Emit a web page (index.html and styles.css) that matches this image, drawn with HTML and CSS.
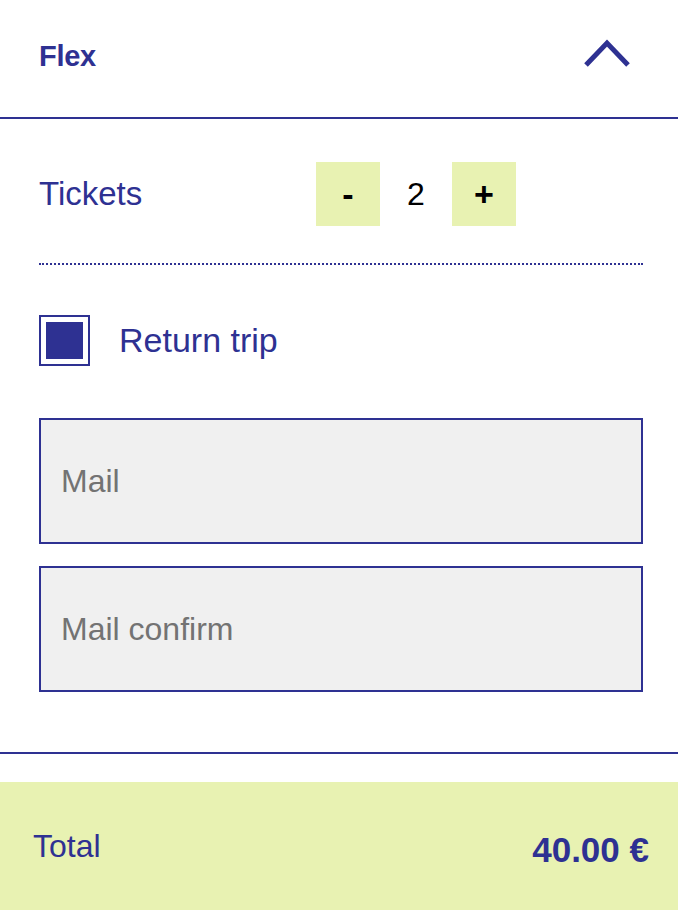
FILE: index.html
```html
<!DOCTYPE html>
<html lang="en">
<head>
  <meta charset="UTF-8">
  <meta name="viewport" content="width=device-width, initial-scale=1.0">
  <title>Flex</title>
  <link rel="stylesheet" href="styles.css">
</head>
<body>
  <div class="panel">
    <div class="panel-header">
      <h2>Flex</h2>
      <svg class="chevron" width="48" height="30" viewBox="0 0 48 30">
        <polyline points="3,26 24,4 45,26" fill="none" stroke="#2e3192" stroke-width="5"/>
      </svg>
    </div>

    <div class="panel-body">
      <div class="tickets-row">
        <span class="label">Tickets</span>
        <div class="stepper">
          <button class="step-btn" onclick="changeCount(-1)">-</button>
          <span class="count" id="count">2</span>
          <button class="step-btn" onclick="changeCount(1)">+</button>
        </div>
      </div>

      <label class="check-row">
        <span class="checkbox"><span class="check-fill"></span></span>
        <span class="label label-wide">Return trip</span>
      </label>

      <input class="field" type="email" placeholder="Mail">
      <input class="field" type="email" placeholder="Mail confirm">
    </div>

    <div class="total-bar">
      <span class="total-label">Total</span>
      <span class="total-price" id="total">40.00 €</span>
    </div>
  </div>

  <script>
    // Preço por bilhete
    const price = 20;
    let count = 2;

    function changeCount(step) {
      count = Math.max(1, count + step);
      document.getElementById('count').textContent = count;
      document.getElementById('total').textContent = (count * price).toFixed(2) + ' €';
    }
  </script>
</body>
</html>
```

FILE: styles.css
```css
body {
  font-family: "Liberation Sans", Arial, sans-serif;
  margin: 0;
  padding: 0;
  background-color: #fff;
  color: #2e3192;
}

.panel {
  width: 678px;
}

.panel-header {
  height: 117px;
  padding: 0 47px 0 39px;
  display: flex;
  justify-content: space-between;
  align-items: center;
  border-bottom: 2px solid #2e3192;
}

.panel-header h2 {
  margin: -5px 0 0;
  font-size: 29px;
  font-weight: bold;
  letter-spacing: -0.3px;
}

.chevron {
  display: block;
  margin-top: -9px;
}

.panel-body {
  padding: 43px 35px 60px 39px;
  border-bottom: 2px solid #2e3192;
}

.tickets-row {
  display: flex;
  align-items: center;
  padding-bottom: 37px;
  border-bottom: 2px dotted #2e3192;
}

.label {
  font-size: 33px;
}

.label-wide {
  font-size: 34px;
}

.stepper {
  display: flex;
  align-items: center;
  margin-left: auto;
  margin-right: 127px;
}

.step-btn {
  width: 64px;
  height: 64px;
  border: none;
  padding: 0;
  background: #e8f2b2;
  color: #000;
  font-family: inherit;
  font-size: 34px;
  font-weight: bold;
  cursor: pointer;
}

.count {
  width: 72px;
  text-align: center;
  font-size: 32px;
  color: #000;
}

.check-row {
  display: flex;
  align-items: center;
  gap: 29px;
  margin-top: 50px;
  margin-bottom: 52px;
}

.checkbox {
  border: 2px solid #2e3192;
  padding: 5px;
  width: 37px;
  height: 37px;
}

.check-fill {
  display: block;
  width: 37px;
  height: 37px;
  background: #2e3192;
}

.field {
  display: block;
  width: 100%;
  height: 126px;
  box-sizing: border-box;
  border: 2px solid #2e3192;
  background: #f0f0f0;
  padding: 0 20px;
  font-family: inherit;
  font-size: 32px;
  color: #333;
  outline: none;
}

.field + .field {
  margin-top: 22px;
}

.field::placeholder {
  color: #737373;
}

.total-bar {
  margin-top: 28px;
  height: 128px;
  background: #e8f2b2;
  display: flex;
  justify-content: space-between;
  align-items: center;
  padding: 0 29px 0 33px;
}

.total-label {
  font-size: 32px;
}

.total-price {
  font-size: 35px;
  font-weight: bold;
  margin-top: 8px;
}
```
